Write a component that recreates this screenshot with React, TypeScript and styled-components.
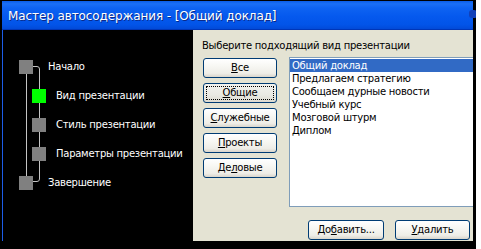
import React from 'react';
import styled, { createGlobalStyle } from 'styled-components';

const GlobalStyle = createGlobalStyle`
  html, body {
    margin: 0;
    padding: 0;
    background: #ffffff;
  }
  body {
    font-family: "DejaVu Sans", Verdana, sans-serif;
    letter-spacing: -0.25px;
  }
`;

const Window = styled.div`
  width: 476px;
  height: 249px;
  box-sizing: border-box;
  padding: 1px 3px 8px 2px;
  background: #000;
  display: flex;
  flex-direction: column;
  overflow: hidden;
`;

const TitleBar = styled.div`
  flex: none;
  height: 28px;
  display: flex;
  align-items: center;
  padding-left: 6px;
  background: linear-gradient(
    to bottom,
    #0a5de6 0%,
    #1b6ff5 10%,
    #0e63f2 25%,
    #0559ee 55%,
    #0254e8 85%,
    #024ad8 100%
  );
  border-bottom: 1px solid #0036b8;
  position: relative;
`;

const Title = styled.span`
  color: #fff;
  font-size: 12px;
  letter-spacing: -0.1px;
  text-shadow: 1px 1px 0 #0a2a8a;
  margin-top: 2px;
`;

const TitleButtonEdge = styled.div`
  position: absolute;
  right: -4px;
  top: 9px;
  width: 8px;
  height: 8px;
  border-radius: 3px;
  background: #1240b8;
`;

const Body = styled.div`
  flex: 1;
  display: flex;
  border-left: 1px solid #1d5de8;
  min-height: 0;
`;

const StepsPanel = styled.div`
  width: 190px;
  flex: none;
  background: #000;
  position: relative;
  box-sizing: border-box;
  padding-top: 30px;
  display: flex;
  flex-direction: column;
  gap: 15px;
`;

const Connectors = styled.svg`
  position: absolute;
  left: 0;
  top: 0;
  width: 190px;
  height: 211px;
  pointer-events: none;
`;

const Step = styled.div<{ $inner?: boolean }>`
  display: flex;
  align-items: center;
  height: 14px;
  padding-left: ${(p) => (p.$inner ? 29 : 16)}px;
  position: relative;
`;

const StepBox = styled.div<{ $active?: boolean }>`
  width: 14px;
  height: 14px;
  flex: none;
  background: ${(p) => (p.$active ? '#00ff00' : '#808080')};
`;

const StepLabel = styled.span<{ $inner?: boolean }>`
  margin-left: ${(p) => (p.$inner ? 10 : 15)}px;
  color: #fff;
  font-size: 10px;
  line-height: 12px;
  white-space: nowrap;
`;

const ContentPanel = styled.div`
  flex: 1;
  background: #e4e3d3;
  box-sizing: border-box;
  padding: 10px 0 0 9px;
  display: flex;
  flex-direction: column;
  overflow: hidden;
`;

const Prompt = styled.div`
  font-size: 10px;
  line-height: 12px;
  color: #000;
  white-space: nowrap;
`;

const MainRow = styled.div`
  display: flex;
  align-items: flex-start;
  margin-top: 5px;
`;

const FilterColumn = styled.div`
  display: flex;
  flex-direction: column;
  gap: 5px;
  margin: 1px 0 0 1px;
  flex: none;
`;

const XpButton = styled.button<{ $w: number; $focused?: boolean }>`
  position: relative;
  width: ${(p) => p.$w}px;
  height: 20px;
  box-sizing: border-box;
  padding: 0;
  border: 1px solid #003c74;
  border-radius: 3px;
  background: ${(p) =>
    p.$focused
      ? 'linear-gradient(to bottom, #f2f2ee 0%, #e9e9e3 60%, #dcdad0 100%)'
      : 'linear-gradient(to bottom, #ffffff 0%, #f7f7f3 40%, #eeede7 80%, #d9d5cb 100%)'};
  font-family: "DejaVu Sans", Verdana, sans-serif;
  font-size: 10px;
  letter-spacing: -0.25px;
  line-height: 12px;
  color: #000;
  text-align: center;
  white-space: nowrap;
  &::after {
    content: '';
    display: ${(p) => (p.$focused ? 'block' : 'none')};
    position: absolute;
    inset: 2px;
    border: 1px dotted #000;
  }
`;

const ListBox = styled.div`
  flex: none;
  width: 200px;
  height: 150px;
  margin-left: 12px;
  box-sizing: border-box;
  border: 1px solid #7f9db9;
  background: #fff;
  padding: 1px 0 0 0;
`;

const ListItem = styled.div<{ $selected?: boolean }>`
  height: 13px;
  line-height: 13px;
  font-size: 10px;
  padding-left: 2px;
  white-space: nowrap;
  color: ${(p) => (p.$selected ? '#fff' : '#000')};
  background: ${(p) => (p.$selected ? '#316ac5' : 'transparent')};
`;

const Footer = styled.div`
  display: flex;
  justify-content: flex-end;
  gap: 11px;
  margin-top: 13px;
  padding-right: 3px;
`;

const steps = [
  { label: 'Начало', inner: false },
  { label: 'Вид презентации', inner: true, active: true },
  { label: 'Стиль презентации', inner: true },
  { label: 'Параметры презентации', inner: true },
  { label: 'Завершение', inner: false },
];

const filters: { pre: string; key: string; post: string }[] = [
  { pre: '', key: 'В', post: 'се' },
  { pre: '', key: 'О', post: 'бщие' },
  { pre: '', key: 'С', post: 'лужебные' },
  { pre: '', key: 'П', post: 'роекты' },
  { pre: 'Де', key: 'л', post: 'овые' },
];

const presentations = [
  'Общий доклад',
  'Предлагаем стратегию',
  'Сообщаем дурные новости',
  'Учебный курс',
  'Мозговой штурм',
  'Диплом',
];

export default function App() {
  return (
    <>
      <GlobalStyle />
      <Window>
        <TitleBar>
          <Title>Мастер автосодержания - [Общий доклад]</Title>
          <TitleButtonEdge />
        </TitleBar>
        <Body>
          <StepsPanel>
            <Connectors viewBox="0 0 190 211">
              <line x1="23.5" y1="44" x2="23.5" y2="146" stroke="#c4c4c4" strokeWidth="1" />
              <path
                d="M30 36.5 H34 Q36.5 36.5 36.5 39 V149 Q36.5 151.5 34 151.5 H30"
                fill="none"
                stroke="#c4c4c4"
                strokeWidth="1"
              />
            </Connectors>
            {steps.map((s) => (
              <Step key={s.label} $inner={s.inner}>
                <StepBox $active={s.active} />
                <StepLabel $inner={s.inner}>{s.label}</StepLabel>
              </Step>
            ))}
          </StepsPanel>
          <ContentPanel>
            <Prompt>Выберите подходящий вид презентации</Prompt>
            <MainRow>
              <FilterColumn>
                {filters.map((f, i) => (
                  <XpButton key={f.post} $w={74} $focused={i === 1}>
                    {f.pre}
                    <u>{f.key}</u>
                    {f.post}
                  </XpButton>
                ))}
              </FilterColumn>
              <ListBox>
                {presentations.map((p, i) => (
                  <ListItem key={p} $selected={i === 0}>
                    {p}
                  </ListItem>
                ))}
              </ListBox>
            </MainRow>
            <Footer>
              <XpButton $w={76}>
                До<u>б</u>авить...
              </XpButton>
              <XpButton $w={75}>
                <u>У</u>далить
              </XpButton>
            </Footer>
          </ContentPanel>
        </Body>
      </Window>
    </>
  );
}
